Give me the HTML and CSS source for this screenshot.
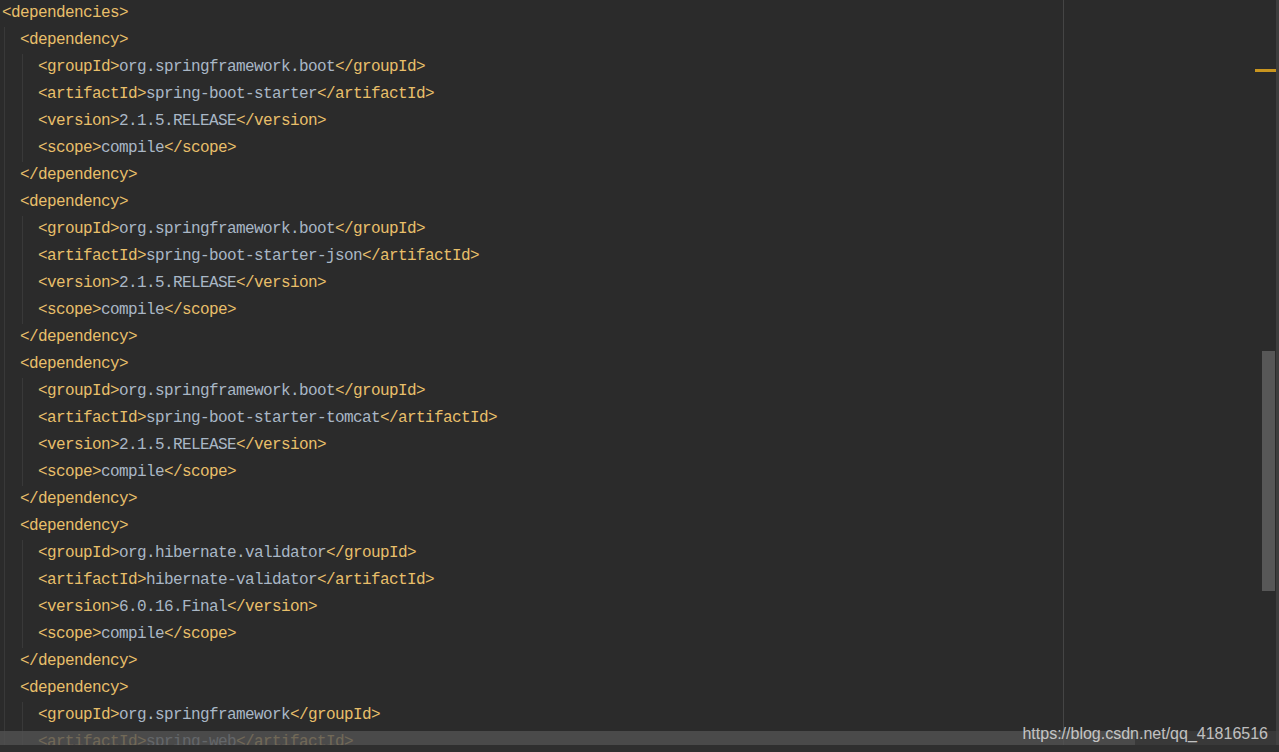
FILE: index.html
```html
<!DOCTYPE html>
<html lang="en">

<head>
    <title>pom.xml</title>
    <link rel="stylesheet" href="styles.css">
</head>

<body>
    <div class="editor">
        <div class="code">
            <div class="line"><span class="t">&lt;dependencies&gt;</span></div>
            <div class="children">

                <div class="line"><span class="t">&lt;dependency&gt;</span></div>
                <div class="children">
                    <div class="line"><span class="t">&lt;groupId&gt;</span><span class="v">org.springframework.boot</span><span class="t">&lt;/groupId&gt;</span></div>
                    <div class="line"><span class="t">&lt;artifactId&gt;</span><span class="v">spring-boot-starter</span><span class="t">&lt;/artifactId&gt;</span></div>
                    <div class="line"><span class="t">&lt;version&gt;</span><span class="v">2.1.5.RELEASE</span><span class="t">&lt;/version&gt;</span></div>
                    <div class="line"><span class="t">&lt;scope&gt;</span><span class="v">compile</span><span class="t">&lt;/scope&gt;</span></div>
                </div>
                <div class="line"><span class="t">&lt;/dependency&gt;</span></div>

                <div class="line"><span class="t">&lt;dependency&gt;</span></div>
                <div class="children">
                    <div class="line"><span class="t">&lt;groupId&gt;</span><span class="v">org.springframework.boot</span><span class="t">&lt;/groupId&gt;</span></div>
                    <div class="line"><span class="t">&lt;artifactId&gt;</span><span class="v">spring-boot-starter-json</span><span class="t">&lt;/artifactId&gt;</span></div>
                    <div class="line"><span class="t">&lt;version&gt;</span><span class="v">2.1.5.RELEASE</span><span class="t">&lt;/version&gt;</span></div>
                    <div class="line"><span class="t">&lt;scope&gt;</span><span class="v">compile</span><span class="t">&lt;/scope&gt;</span></div>
                </div>
                <div class="line"><span class="t">&lt;/dependency&gt;</span></div>

                <div class="line"><span class="t">&lt;dependency&gt;</span></div>
                <div class="children">
                    <div class="line"><span class="t">&lt;groupId&gt;</span><span class="v">org.springframework.boot</span><span class="t">&lt;/groupId&gt;</span></div>
                    <div class="line"><span class="t">&lt;artifactId&gt;</span><span class="v">spring-boot-starter-tomcat</span><span class="t">&lt;/artifactId&gt;</span></div>
                    <div class="line"><span class="t">&lt;version&gt;</span><span class="v">2.1.5.RELEASE</span><span class="t">&lt;/version&gt;</span></div>
                    <div class="line"><span class="t">&lt;scope&gt;</span><span class="v">compile</span><span class="t">&lt;/scope&gt;</span></div>
                </div>
                <div class="line"><span class="t">&lt;/dependency&gt;</span></div>

                <div class="line"><span class="t">&lt;dependency&gt;</span></div>
                <div class="children">
                    <div class="line"><span class="t">&lt;groupId&gt;</span><span class="v">org.hibernate.validator</span><span class="t">&lt;/groupId&gt;</span></div>
                    <div class="line"><span class="t">&lt;artifactId&gt;</span><span class="v">hibernate-validator</span><span class="t">&lt;/artifactId&gt;</span></div>
                    <div class="line"><span class="t">&lt;version&gt;</span><span class="v">6.0.16.Final</span><span class="t">&lt;/version&gt;</span></div>
                    <div class="line"><span class="t">&lt;scope&gt;</span><span class="v">compile</span><span class="t">&lt;/scope&gt;</span></div>
                </div>
                <div class="line"><span class="t">&lt;/dependency&gt;</span></div>

                <div class="line"><span class="t">&lt;dependency&gt;</span></div>
                <div class="children">
                    <div class="line"><span class="t">&lt;groupId&gt;</span><span class="v">org.springframework</span><span class="t">&lt;/groupId&gt;</span></div>
                    <div class="line"><span class="t">&lt;artifactId&gt;</span><span class="v">spring-web</span><span class="t">&lt;/artifactId&gt;</span></div>
                </div>

            </div>
        </div>
    </div>

    <div class="side">
        <div class="blank"></div>
        <div class="vscroll">
            <div class="thumb"></div>
        </div>
        <div class="edge"></div>
        <div class="marker"></div>
    </div>

    <div class="hscroll">
        <div class="hthumb"></div>
    </div>
    <div class="bottom"></div>

    <div class="watermark">https://blog.csdn.net/qq_41816516</div>
</body>

</html>
```

FILE: styles.css
```css
html,
body {
    margin: 0;
    height: 100%;
    overflow: hidden;
}

body {
    display: flex;
    background-color: #2b2b2b;
    position: relative;
}

.editor {
    width: 1063px;
    border-right: 1px solid #454545;
    overflow: hidden;
}

.code {
    padding-left: 2px;
    font-family: "Liberation Mono", monospace;
    font-size: 16px;
    letter-spacing: -0.6px;
}

.line {
    height: 27px;
    line-height: 26px;
    white-space: pre;
}

.children {
    margin-left: 2px;
    padding-left: 15px;
    border-left: 1px solid #393939;
}

.t {
    color: #e8bf6a;
}

.v {
    color: #a9b7c6;
}

.side {
    flex: 1;
    display: flex;
    position: relative;
}

.blank {
    flex: 1;
}

.vscroll {
    width: 14px;
    padding-top: 351px;
}

.thumb {
    width: 13px;
    height: 240px;
    background-color: #575757;
}

.edge {
    width: 3px;
    background-color: #3d3d3d;
}

.marker {
    position: absolute;
    left: 191px;
    top: 69px;
    width: 21px;
    height: 3px;
    background-color: #c9951f;
}

.hscroll {
    position: absolute;
    left: 0;
    right: 0;
    bottom: 7px;
    height: 14px;
    background-color: rgba(70, 70, 70, 0.55);
}

.hthumb {
    width: 1135px;
    height: 100%;
    background-color: rgba(90, 90, 90, 0.55);
}

.bottom {
    position: absolute;
    left: 0;
    right: 0;
    bottom: 0;
    height: 7px;
    background-color: #2f2f2f;
}

.watermark {
    position: absolute;
    right: 11px;
    bottom: 9px;
    font-family: "Liberation Sans", Arial, sans-serif;
    font-size: 16px;
    color: rgba(230, 230, 230, 0.8);
}
```
